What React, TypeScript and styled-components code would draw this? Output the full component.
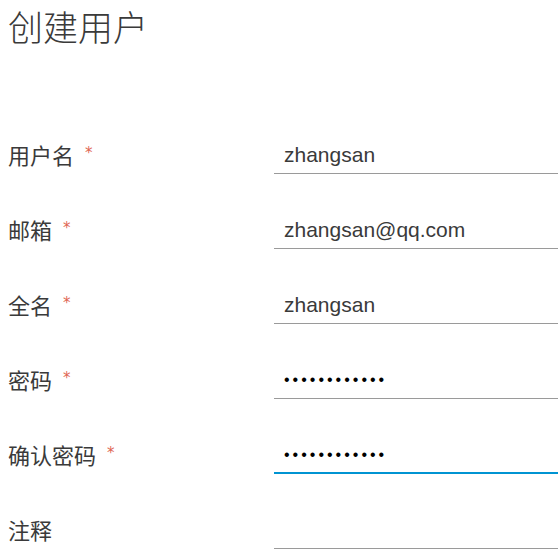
import React from "react";
import styled, { createGlobalStyle } from "styled-components";

const GlobalStyle = createGlobalStyle`
    html, body {
        margin: 0;
        padding: 0;
        background: #ffffff;
        overflow: hidden;
    }
`;

const fields = [
    { label: "用户名", value: "zhangsan", type: "text", required: true },
    { label: "邮箱", value: "zhangsan@qq.com", type: "text", required: true },
    { label: "全名", value: "zhangsan", type: "text", required: true },
    { label: "密码", value: "zhangsan1234", type: "password", required: true },
    { label: "确认密码", value: "zhangsan1234", type: "password", required: true, active: true },
    { label: "注释", value: "", type: "text", required: false },
];

export default function App() {
    return (
        <>
            <GlobalStyle />
            <Page>
                <Title>创建用户</Title>
                <Form>
                    {fields.map((f) => (
                        <Row key={f.label}>
                            <Label>
                                {f.label}
                                {f.required && <Required>*</Required>}
                            </Label>
                            <Input
                                type={f.type}
                                defaultValue={f.value}
                                readOnly
                                $active={!!f.active}
                                $password={f.type === "password"}
                            />
                        </Row>
                    ))}
                </Form>
            </Page>
        </>
    );
}

const Page = styled.div`
    padding: 6px 0 0 8px;
    font-family: "Noto Sans CJK SC", "Liberation Sans", sans-serif;
    color: #333333;
`;

const Title = styled.h1`
    margin: 0;
    font-size: 35px;
    line-height: 40px;
    font-weight: 300;
    color: #3a3a3a;
`;

const Form = styled.form`
    display: flex;
    flex-direction: column;
    gap: 39px;
    margin-top: 91.5px;
`;

const Row = styled.div`
    display: grid;
    grid-template-columns: 266px 300px;
    align-items: center;
    height: 36px;
`;

const Label = styled.label`
    display: flex;
    align-items: center;
    font-size: 22px;
    line-height: 36px;
    color: #3a3a3a;
    position: relative;
    top: -2px;
`;

const Required = styled.span`
    font-family: "DejaVu Sans", sans-serif;
    font-size: 15px;
    color: #e06552;
    margin-left: 11px;
    position: relative;
    top: -1px;
`;

const Input = styled.input<{ $active: boolean; $password: boolean }>`
    box-sizing: border-box;
    width: 300px;
    height: 36px;
    padding: 0 10px;
    margin: 0;
    border: none;
    border-bottom: ${(p) => (p.$active ? "2px solid #0094d2" : "1px solid #9a9a9a")};
    outline: none;
    background: transparent;
    font-family: "Liberation Sans", sans-serif;
    font-size: ${(p) => (p.$password ? "16px" : "21px")};
    color: ${(p) => (p.$password ? "#000000" : "#3a3a3a")};
    letter-spacing: ${(p) => (p.$password ? "3px" : "normal")};
`;
